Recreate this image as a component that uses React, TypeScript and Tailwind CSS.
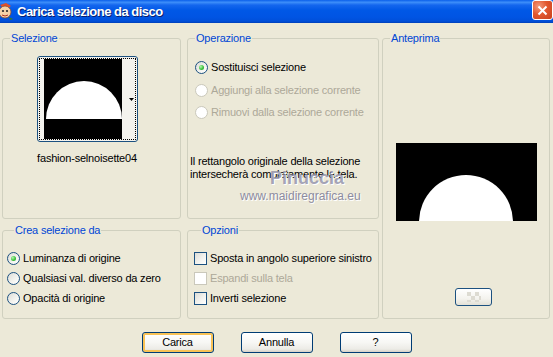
import clsx from "clsx";
import { ReactNode } from "react";

const Radio = ({ checked, disabled }: { checked?: boolean; disabled?: boolean }) => (
  <span
    className={clsx(
      "flex h-[13px] w-[13px] shrink-0 items-center justify-center rounded-full border",
      disabled
        ? "border-[#cac8bb] bg-white"
        : "border-[#1c5180] bg-[linear-gradient(135deg,#dcdcd7_0%,#f4f4f0_60%,#ffffff_100%)]"
    )}
  >
    {checked && (
      <span className="h-[5px] w-[5px] rounded-full bg-[radial-gradient(circle_at_35%_35%,#b8f7b0_0%,#3dc23d_55%,#1e961e_100%)]" />
    )}
  </span>
);

const Check = ({ disabled }: { disabled?: boolean }) => (
  <span
    className={clsx(
      "h-[13px] w-[13px] shrink-0 border",
      disabled
        ? "border-[#cac8bb] bg-white"
        : "border-[#1c5180] bg-[linear-gradient(135deg,#dcdcd7_0%,#f4f4f0_60%,#ffffff_100%)]"
    )}
  />
);

const Option = ({
  control,
  label,
  disabled,
  className,
}: {
  control: ReactNode;
  label: string;
  disabled?: boolean;
  className?: string;
}) => (
  <div className={clsx("flex h-[20px] items-center gap-[3px]", className)}>
    {control}
    <span className={disabled ? "text-[#aca899]" : "text-black"}>{label}</span>
  </div>
);

const Group = ({
  title,
  className,
  children,
}: {
  title: string;
  className?: string;
  children?: ReactNode;
}) => (
  <fieldset className={clsx("min-w-0 rounded-[3px] border border-[#d0d0bf]", className)}>
    <legend className="ml-[7px] px-[1px] leading-[14px] text-[#0046d5]">{title}</legend>
    {children}
  </fieldset>
);

const Button = ({ label, isDefault }: { label: string; isDefault?: boolean }) => (
  <button
    className={clsx(
      "h-[21px] w-[72px] rounded-[3px] border border-[#003c74] bg-[linear-gradient(180deg,#ffffff_0%,#f7f7f4_50%,#ecebe6_85%,#d6d0c5_100%)] leading-[19px] text-black",
      isDefault && "shadow-[inset_0_0_0_2px_#f8c256]"
    )}
  >
    {label}
  </button>
);

const HalfMoon = ({ w, h, cx, cy, r }: { w: number; h: number; cx: number; cy: number; r: number }) => (
  <svg width={w} height={h} viewBox={`0 0 ${w} ${h}`} className="block bg-black">
    <path d={`M${cx - r} ${cy} A${r} ${r} 0 0 1 ${cx + r} ${cy} Z`} fill="#fff" />
  </svg>
);

export default function App() {
  return (
    <div className="flex h-[357px] w-[553px] flex-col overflow-hidden bg-[#ece9d8] font-['Liberation_Sans',Arial,sans-serif] text-[11px] tracking-[-0.2px] text-black">
      {/* title bar */}
      <div className="flex h-[23px] shrink-0 items-start bg-[linear-gradient(180deg,#0a5fea_0%,#3d8ef9_10%,#1466ee_22%,#0058e6_45%,#0054e3_75%,#004fd9_92%,#003fb8_100%)]">
        <svg width="14" height="18" viewBox="0 0 14 18" className="mt-[2px]">
          <path d="M0 3 L6 1 L11 4 L8 6 L3 6 Z" fill="#e2512a" />
          <ellipse cx="5" cy="10" rx="6" ry="6" fill="#f6d3a8" stroke="#8a4a2a" strokeWidth="0.8" />
          <circle cx="3" cy="9" r="1.1" fill="#2a2a2a" />
          <circle cx="7" cy="9" r="1.1" fill="#2a2a2a" />
          <path d="M2 13 Q5 15 8 13" stroke="#b03020" strokeWidth="1" fill="none" />
          <path d="M9 15 L13 17 L10 18 Z" fill="#3a7a2a" />
        </svg>
        <span className="ml-[3px] mt-[4px] text-[13px] leading-[15px] font-bold tracking-[-0.5px] text-white [text-shadow:1px_1px_0_#0a1e6e]">
          Carica selezione da disco
        </span>
        <div className="ml-auto flex h-[20px] w-[21px] items-center justify-center rounded-[3px] border border-white bg-[radial-gradient(circle_at_30%_30%,#f39a7c_0%,#e2582f_45%,#c8401c_100%)]">
          <svg width="11" height="11" viewBox="0 0 11 11">
            <path d="M1.5 1.5 L9.5 9.5 M9.5 1.5 L1.5 9.5" stroke="#fff" strokeWidth="2" />
          </svg>
        </div>
      </div>

      <div className="flex flex-1 flex-col pt-[8px]">
        <div className="flex items-start pl-[2px]">
          {/* left column */}
          <div className="flex w-[179px] flex-col gap-[4px]">
            <Group title="Selezione" className="h-[188px] pt-[11px]">
              <div className="flex flex-col items-center pr-[9px]">
                <div className="h-[86px] w-[101px] rounded-[3px] border border-[#1c5180] bg-[#f4f3ee] p-[1px]">
                  <div className="flex h-full items-center border border-dotted border-black pl-[4px]">
                    <HalfMoon w={78} h={80} cx={40} cy={60} r={38} />
                    <div className="flex flex-1 justify-end pr-[1px]">
                      <svg width="5" height="3" viewBox="0 0 5 3">
                        <path d="M0 0 H5 L2.5 3 Z" fill="#000" />
                      </svg>
                    </div>
                  </div>
                </div>
                <div className="mt-[10px] leading-[12px]">fashion-selnoisette04</div>
              </div>
            </Group>
            <Group title="Crea selezione da" className="h-[96px] pl-[4px] pt-[11px]">
              <Option control={<Radio checked />} label="Luminanza di origine" />
              <Option control={<Radio />} label="Qualsiasi val. diverso da zero" />
              <Option control={<Radio />} label="Opacità di origine" />
            </Group>
          </div>

          {/* middle column */}
          <div className="ml-[6px] flex w-[192px] flex-col gap-[4px]">
            <Group title="Operazione" className="relative h-[188px] pt-[12px]">
              <div className="pl-[7px]">
                <Option control={<Radio checked />} label="Sostituisci selezione" />
                <Option control={<Radio disabled />} label="Aggiungi alla selezione corrente" disabled className="mt-[3px]" />
                <Option control={<Radio disabled />} label="Rimuovi dalla selezione corrente" disabled className="mt-[2px]" />
              </div>
              <p className="mt-[33px] px-[2px] leading-[13px]">
                Il rettangolo originale della selezione
                <br />
                intersecherà completamente la tela.
              </p>
              <span className="absolute left-[82px] top-[123px] text-[18px] leading-[20px] font-bold tracking-normal text-[#8c8ca6]/80 [text-shadow:1px_1px_0_#ffffff]">
                Pinuccia
              </span>
              <span className="absolute left-[52px] top-[144px] text-[12px] leading-[14px] tracking-normal text-[#8c8ca0] [text-shadow:1px_1px_0_#ffffff]">
                www.maidiregrafica.eu
              </span>
            </Group>
            <Group title="Opzioni" className="h-[96px] pl-[6px] pt-[11px]">
              <Option control={<Check />} label="Sposta in angolo superiore sinistro" />
              <Option control={<Check disabled />} label="Espandi sulla tela" disabled />
              <Option control={<Check />} label="Inverti selezione" />
            </Group>
          </div>

          {/* right column */}
          <Group title="Anteprima" className="ml-[3px] h-[288px] w-[168px] pt-[98px]">
            <div className="flex justify-center">
              <HalfMoon w={141} h={78} cx={70} cy={79} r={47} />
            </div>
            <div className="ml-[72px] mt-[67px] flex h-[18px] w-[37px] items-center justify-center rounded-[3px] border border-[#1c5180] bg-[linear-gradient(180deg,#ffffff_0%,#f4f3ee_60%,#e3e1d6_100%)]">
              <svg width="14" height="10" viewBox="0 0 14 10">
                <path d="M0 0h4v4H0zM8 0h4v4H8zM4 4h4v4H4zM12 4h2v4h-2zM0 8h4v2H0zM8 8h4v2H8z" fill="#dddbd2" />
              </svg>
            </div>
          </Group>
        </div>

        <div className="mt-[13px] flex justify-center gap-[27px]">
          <Button label="Carica" isDefault />
          <Button label="Annulla" />
          <Button label="?" />
        </div>
      </div>
    </div>
  );
}
